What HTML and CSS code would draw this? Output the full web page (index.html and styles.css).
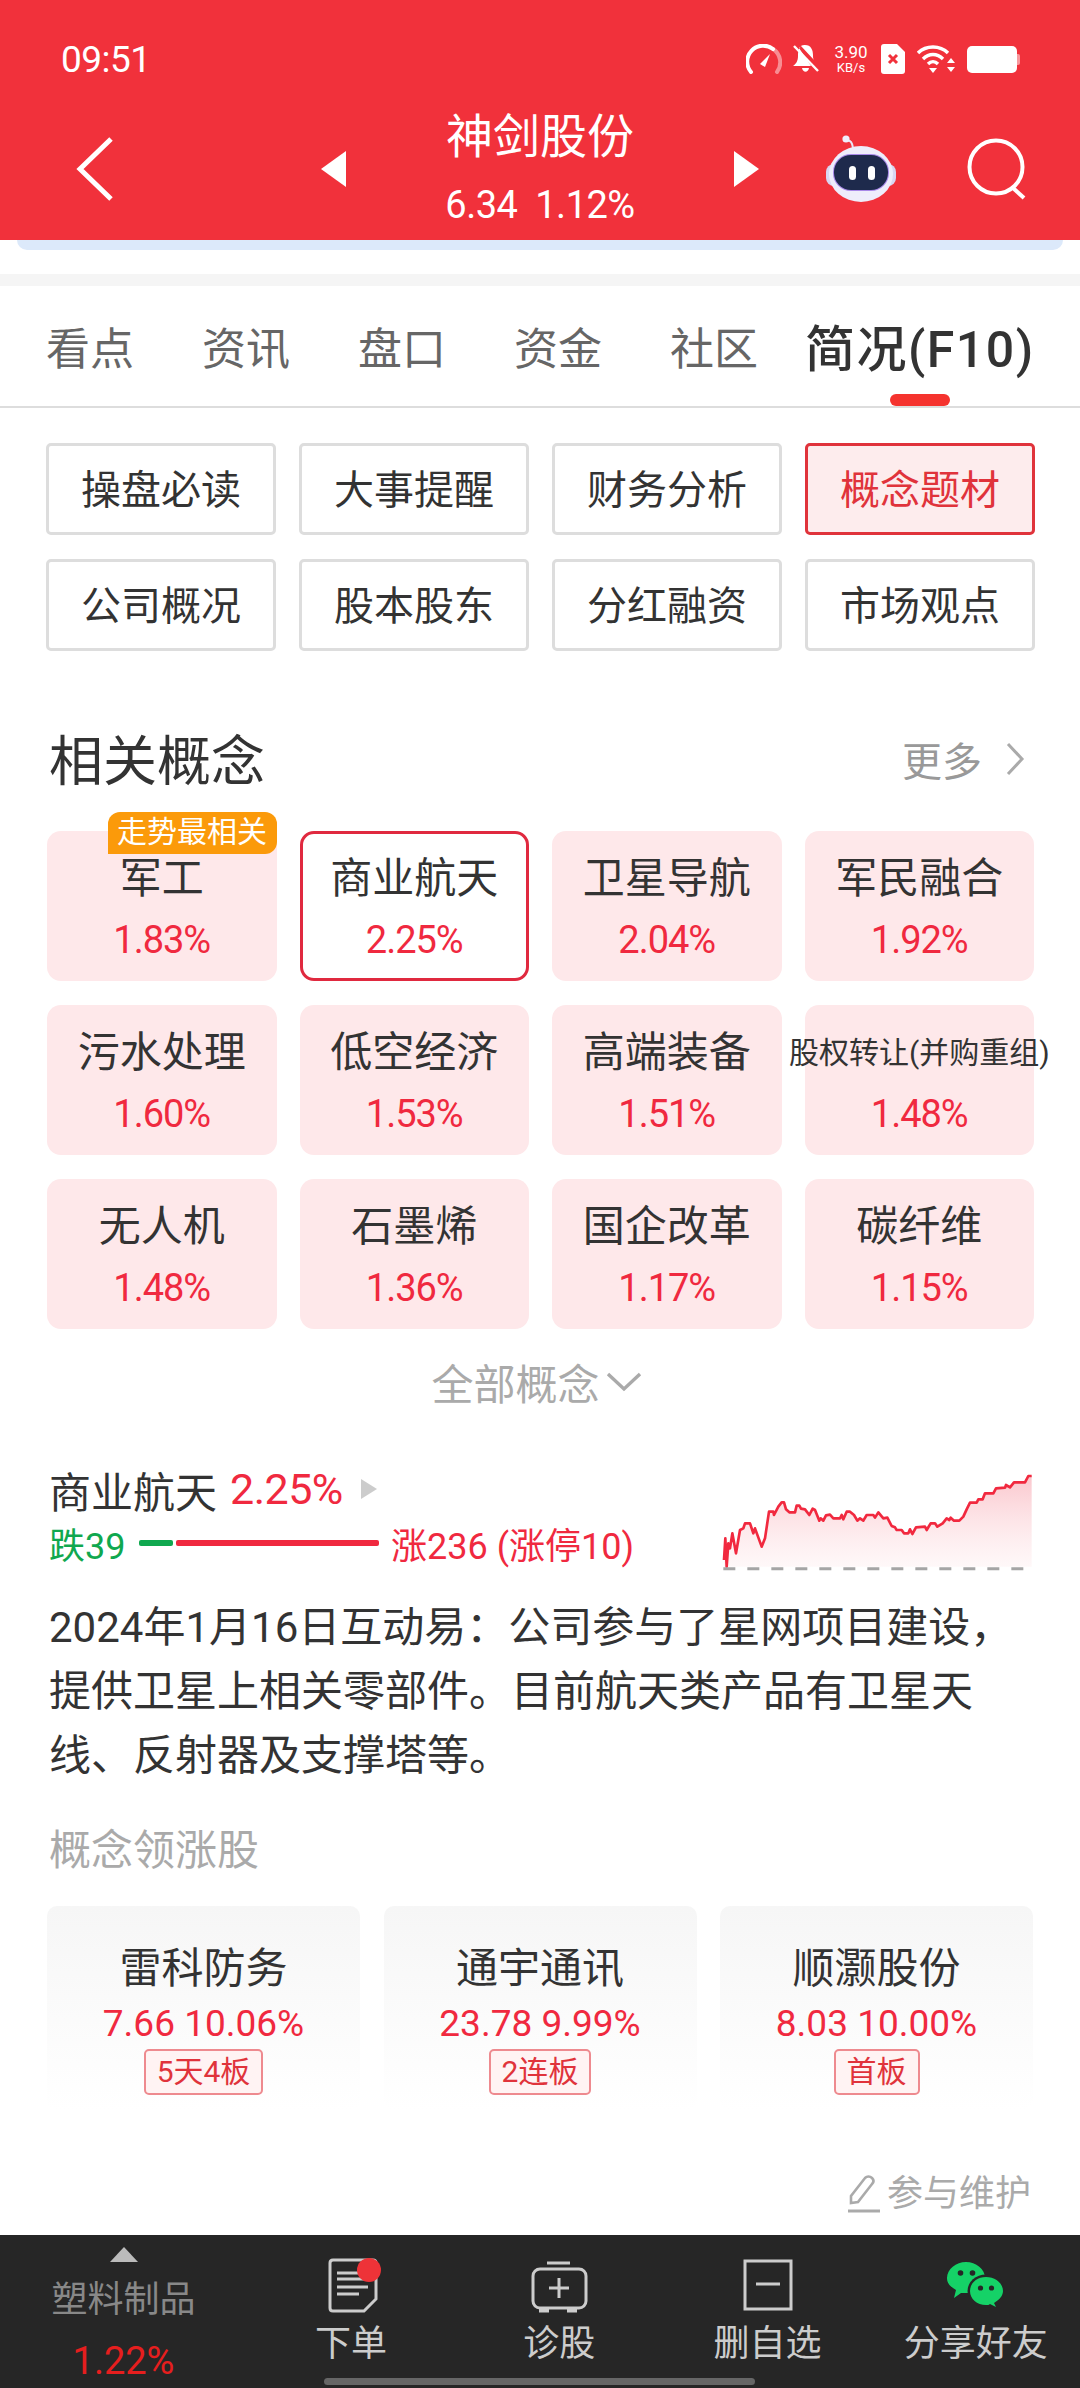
FILE: index.html
```html
<!DOCTYPE html>
<html lang="zh-CN">
<head>
    <meta charset="UTF-8">
    <meta name="viewport" content="width=device-width, initial-scale=1.0">
    <title>神剑股份</title>
    <link rel="stylesheet" href="styles.css">
</head>
<body>
<div class="page">

    <!-- 顶部红色区域 -->
    <header class="header">
        <div class="status">
            <span class="time">09:51</span>
            <div class="status-icons">
                <svg class="ic-gauge" width="36" height="30" viewBox="0 0 36 30" fill="none">
                    <path d="M5 28A16 16 0 0 1 27 5" stroke="#fff" stroke-width="4" stroke-linecap="round"/>
                    <path d="M27 5A16 16 0 0 1 31 28" stroke="#fff" stroke-opacity=".45" stroke-width="4" stroke-linecap="round"/>
                    <path d="M14 20L24 10L19 23Z" fill="#fff"/>
                </svg>
                <svg class="ic-bell" width="27" height="30" viewBox="0 0 27 30" fill="none">
                    <path d="M13 1C7 1 6 7 6 12C6 17 4 20 1 22H19L7 4C9 2 11 1 13 1Z" fill="#fff"/>
                    <path d="M13 1C19 1 21 6 21 11C21 13 21 15 22 16L9 2C10 1 12 1 13 1Z" fill="#fff"/>
                    <path d="M10 24H17C16 29 11 29 10 24Z" fill="#fff"/>
                    <path d="M2 2L26 27" stroke="#fff" stroke-width="2.4"/>
                </svg>
                <div class="speed"><span class="speed-num">3.90</span><span class="speed-unit">KB/s</span></div>
                <svg class="ic-sim" width="24" height="30" viewBox="0 0 24 30">
                    <path d="M3 0H16L24 8V27C24 29 23 30 21 30H3C1 30 0 29 0 27V3C0 1 1 0 3 0Z" fill="#fff"/>
                    <path d="M8 11L16 19M16 11L8 19" stroke="#f1313b" stroke-width="3"/>
                </svg>
                <svg class="ic-wifi" width="38" height="30" viewBox="0 0 38 30" fill="none" stroke="#fff" stroke-width="3.4">
                    <path d="M1 9C9 1 23 1 31 9"/>
                    <path d="M6 15C12 9 20 9 26 15"/>
                    <path d="M11 20C14 17 18 17 21 20"/>
                    <path d="M12 24H20L16 29Z" fill="#fff" stroke="none"/>
                    <path d="M30 19H38L34 14Z M30 23H38L34 28Z" fill="#fff" stroke="none"/>
                </svg>
                <div class="battery"></div>
            </div>
        </div>
        <div class="nav">
            <svg class="back" width="38" height="64" viewBox="0 0 38 64" fill="none">
                <path d="M35 2L4 32L35 62" stroke="#fff" stroke-width="5"/>
            </svg>
            <div class="tri tri-left"></div>
            <div class="stock">
                <div class="stock-name">神剑股份</div>
                <div class="stock-price">6.34&nbsp;&nbsp;1.12%</div>
            </div>
            <div class="tri tri-right"></div>
            <svg class="robot" width="74" height="68" viewBox="0 0 74 68">
                <path d="M29 13C28 7 27 6 23 5" fill="none" stroke="#e8e6f8" stroke-width="2"/>
                <circle cx="22" cy="4" r="3.6" fill="#f0eefc"/>
                <rect x="2" y="29" width="70" height="22" rx="8" fill="#d8d6f2"/>
                <ellipse cx="37" cy="39" rx="32" ry="28" fill="#eeedfb"/>
                <rect x="9" y="19" width="56" height="37" rx="18" fill="#a888e8"/>
                <rect x="10" y="20" width="54" height="35" rx="17" fill="#1e2a4c"/>
                <rect x="25" y="31" width="7" height="14" rx="3.5" fill="#fff"/>
                <rect x="44" y="31" width="7" height="14" rx="3.5" fill="#fff"/>
            </svg>
            <svg class="search" width="62" height="62" viewBox="0 0 62 62" fill="none" stroke="#fff" stroke-width="4">
                <circle cx="30" cy="29" r="26.5"/>
                <path d="M47 50L58 60"/>
            </svg>
        </div>
    </header>

    <main class="main">
        <div class="blue-strip"></div>
        <div class="gray-bar"></div>

        <nav class="tabs">
            <span class="tab">看点</span>
            <span class="tab">资讯</span>
            <span class="tab">盘口</span>
            <span class="tab">资金</span>
            <span class="tab">社区</span>
            <span class="tab tab-active">简况(F10)</span>
        </nav>

        <div class="sub-menu">
            <div class="sub-btn">操盘必读</div>
            <div class="sub-btn">大事提醒</div>
            <div class="sub-btn">财务分析</div>
            <div class="sub-btn sub-active">概念题材</div>
            <div class="sub-btn">公司概况</div>
            <div class="sub-btn">股本股东</div>
            <div class="sub-btn">分红融资</div>
            <div class="sub-btn">市场观点</div>
        </div>

        <div class="section-head">
            <h2 class="section-title">相关概念</h2>
            <div class="more">
                <span>更多</span>
                <svg width="20" height="34" viewBox="0 0 20 34" fill="none">
                    <path d="M3 2L17 17L3 32" stroke="#aaa" stroke-width="3"/>
                </svg>
            </div>
        </div>

        <div class="concepts">
            <div class="concept">
                <span class="badge">走势最相关</span>
                <div class="concept-name">军工</div>
                <div class="concept-pct">1.83%</div>
            </div>
            <div class="concept concept-on">
                <div class="concept-name">商业航天</div>
                <div class="concept-pct">2.25%</div>
            </div>
            <div class="concept">
                <div class="concept-name">卫星导航</div>
                <div class="concept-pct">2.04%</div>
            </div>
            <div class="concept">
                <div class="concept-name">军民融合</div>
                <div class="concept-pct">1.92%</div>
            </div>
            <div class="concept">
                <div class="concept-name">污水处理</div>
                <div class="concept-pct">1.60%</div>
            </div>
            <div class="concept">
                <div class="concept-name">低空经济</div>
                <div class="concept-pct">1.53%</div>
            </div>
            <div class="concept">
                <div class="concept-name">高端装备</div>
                <div class="concept-pct">1.51%</div>
            </div>
            <div class="concept">
                <div class="concept-name concept-long">股权转让(并购重组)</div>
                <div class="concept-pct">1.48%</div>
            </div>
            <div class="concept">
                <div class="concept-name">无人机</div>
                <div class="concept-pct">1.48%</div>
            </div>
            <div class="concept">
                <div class="concept-name">石墨烯</div>
                <div class="concept-pct">1.36%</div>
            </div>
            <div class="concept">
                <div class="concept-name">国企改革</div>
                <div class="concept-pct">1.17%</div>
            </div>
            <div class="concept">
                <div class="concept-name">碳纤维</div>
                <div class="concept-pct">1.15%</div>
            </div>
        </div>

        <div class="all-concepts">
            <span>全部概念</span>
            <svg width="36" height="22" viewBox="0 0 36 22" fill="none">
                <path d="M2 3L18 18L34 3" stroke="#aaa" stroke-width="3.4"/>
            </svg>
        </div>

        <div class="detail-head">
            <div class="detail-left">
                <div class="detail-title">
                    <span class="detail-name">商业航天</span>
                    <span class="detail-pct">2.25%</span>
                    <span class="detail-tri"></span>
                </div>
                <div class="breadth">
                    <span class="down">跌39</span>
                    <span class="bar-down"></span>
                    <span class="bar-up"></span>
                    <span class="up">涨236&nbsp;(涨停10)</span>
                </div>
            </div>
            <svg class="spark" width="312" height="102" viewBox="66 60 936 306">
                <defs>
                    <linearGradient id="sparkFill" x1="0" y1="0" x2="0" y2="1">
                        <stop offset="0" stop-color="#f9b5bd" stop-opacity=".75"/>
                        <stop offset="1" stop-color="#fdeaec" stop-opacity=".35"/>
                    </linearGradient>
                </defs>
                <path fill="url(#sparkFill)" d="M72 350L72 330L76 265L80 350L85 280L90 295L97 250L108 310L120 240L130 235L135 220L150 220L160 250L165 235L185 290L195 265L207 185L220 185L222 195L235 170L245 157L252 157L258 178L268 187L285 187L290 167L298 167L303 176L315 178L328 195L338 176L345 180L358 212L362 205L370 212L378 196L390 194L400 205L420 205L425 195L430 208L440 185L450 185L462 195L472 212L480 205L490 212L500 195L520 195L525 203L535 187L550 205L562 203L575 228L585 232L590 240L605 240L612 250L625 250L630 238L637 252L648 232L675 230L680 240L692 220L705 220L712 230L728 220L740 205L748 210L752 203L762 212L778 212L790 200L800 178L810 158L830 158L835 148L848 148L855 130L880 130L888 115L915 113L918 105L930 112L942 97L975 97L985 78L995 78L995 350Z"/>
                <polyline fill="none" stroke="#f1293f" stroke-width="8" stroke-linejoin="round" points="72,330 76,265 80,350 85,280 90,295 97,250 108,310 120,240 130,235 135,220 150,220 160,250 165,235 185,290 195,265 207,185 220,185 222,195 235,170 245,157 252,157 258,178 268,187 285,187 290,167 298,167 303,176 315,178 328,195 338,176 345,180 358,212 362,205 370,212 378,196 390,194 400,205 420,205 425,195 430,208 440,185 450,185 462,195 472,212 480,205 490,212 500,195 520,195 525,203 535,187 550,205 562,203 575,228 585,232 590,240 605,240 612,250 625,250 630,238 637,252 648,232 675,230 680,240 692,220 705,220 712,230 728,220 740,205 748,210 752,203 762,212 778,212 790,200 800,178 810,158 830,158 835,148 848,148 855,130 880,130 888,115 915,113 918,105 930,112 942,97 975,97 985,78 995,78"/>
                <line x1="70" y1="356" x2="995" y2="356" stroke="#a5a5a5" stroke-width="9" stroke-dasharray="36 36"/>
            </svg>
        </div>

        <p class="desc">2024年1月16日互动易：公司参与了星网项目建设，提供卫星上相关零部件。目前航天类产品有卫星天线、反射器及支撑塔等。</p>

        <div class="lead-title">概念领涨股</div>
        <div class="leaders">
            <div class="leader">
                <div class="leader-name">雷科防务</div>
                <div class="leader-price">7.66 10.06%</div>
                <span class="leader-tag">5天4板</span>
            </div>
            <div class="leader">
                <div class="leader-name">通宇通讯</div>
                <div class="leader-price">23.78 9.99%</div>
                <span class="leader-tag">2连板</span>
            </div>
            <div class="leader">
                <div class="leader-name">顺灏股份</div>
                <div class="leader-price">8.03 10.00%</div>
                <span class="leader-tag">首板</span>
            </div>
        </div>

        <div class="maintain">
            <svg width="34" height="38" viewBox="0 0 34 38" fill="none" stroke="#aaa" stroke-width="2.6">
                <path d="M4 28L4 21L18 3C20 1 23 1 25 3C27 5 27 7 25 9L11 27Z"/>
                <path d="M1 36H33" stroke-width="3"/>
            </svg>
            <span>参与维护</span>
        </div>
    </main>

    <!-- 底部工具栏 -->
    <footer class="toolbar">
        <div class="sector">
            <div class="sector-tri"></div>
            <div class="sector-name">塑料制品</div>
            <div class="sector-pct">1.22%</div>
        </div>
        <div class="tool">
            <svg class="tool-icon" width="60" height="58" viewBox="0 0 60 58" fill="none" stroke="#ccc" stroke-width="3">
                <path d="M12 3H52C54 3 55 4 55 6V42L43 54H12C10 54 9 53 9 51V6C9 4 10 3 12 3Z"/>
                <path d="M16 16H38M16 22H44M16 30H47M16 37H38"/>
                <circle cx="48" cy="13" r="12" fill="#ee3338" stroke="none"/>
            </svg>
            <span class="tool-label">下单</span>
        </div>
        <div class="tool">
            <svg class="tool-icon" width="60" height="58" viewBox="0 0 60 58" fill="none" stroke="#ccc" stroke-width="3">
                <path d="M18 6H41"/>
                <rect x="4" y="12" width="53" height="39" rx="7"/>
                <path d="M10 53H20M38 53H48" stroke-width="5"/>
                <path d="M30 21V41M20 31H40"/>
            </svg>
            <span class="tool-label">诊股</span>
        </div>
        <div class="tool">
            <svg class="tool-icon" width="60" height="58" viewBox="0 0 60 58" fill="none" stroke="#ccc" stroke-width="3">
                <rect x="7" y="4" width="46" height="48"/>
                <path d="M18 27H42"/>
            </svg>
            <span class="tool-label">删自选</span>
        </div>
        <div class="tool">
            <svg class="tool-icon" width="60" height="58" viewBox="0 0 60 58">
                <path d="M8 41L10 33C5 30 1 27 1 21C1 12 10 5 20 5C30 5 39 12 39 21C39 30 30 36 20 36C18 36 17 36 15 36Z" fill="#15d267"/>
                <ellipse cx="40" cy="34" rx="18.5" ry="16.5" fill="#262626"/>
                <path d="M50 50L48 46C53 43 57 39 57 34C57 26 49 20 40 20C31 20 24 26 24 34C24 42 31 48 40 48C42 48 43 48 44 47Z" fill="#15d267"/>
                <circle cx="14.5" cy="16" r="2.8" fill="#262626"/>
                <circle cx="26.5" cy="16" r="2.8" fill="#262626"/>
                <circle cx="34.5" cy="31" r="2.6" fill="#262626"/>
                <circle cx="45.5" cy="31" r="2.6" fill="#262626"/>
            </svg>
            <span class="tool-label">分享好友</span>
        </div>
        <div class="home-bar"></div>
    </footer>

</div>
</body>
</html>
```

FILE: styles.css
```css
* {
    box-sizing: border-box;
}
body {
    margin: 0;
    background-color: #fff;
    font-family: Roboto, "Noto Sans CJK SC", sans-serif;
    color: #333;
}
.page {
    width: 1080px;
    height: 2388px;
    display: flex;
    flex-direction: column;
    overflow: hidden;
}

/* header */
.header {
    height: 240px;
    background-color: #f1313b;
    color: #fff;
}
.status {
    height: 100px;
    padding: 18px 60px 0 61px;
    display: flex;
    align-items: center;
    justify-content: space-between;
}
.time {
    padding-top: 2px;
    font-size: 37px;
    line-height: 44px;
    letter-spacing: -0.5px;
}
.status-icons {
    display: flex;
    align-items: center;
}
.ic-bell {
    margin-left: 10px;
}
.speed {
    width: 40px;
    height: 32px;
    margin-left: 12px;
    display: flex;
    flex-direction: column;
    align-items: center;
}
.speed-num {
    font-size: 17px;
    line-height: 18px;
}
.speed-unit {
    font-size: 13px;
    line-height: 14px;
}
.ic-sim {
    margin-left: 10px;
}
.ic-wifi {
    margin-left: 12px;
}
.battery {
    position: relative;
    width: 50px;
    height: 27px;
    margin-left: 12px;
    margin-right: 3px;
    background-color: #fff;
    border-radius: 5px;
}
.battery::after {
    content: "";
    position: absolute;
    left: 50px;
    top: 8px;
    width: 3px;
    height: 11px;
    background-color: rgba(255, 255, 255, 0.5);
    border-radius: 0 2px 2px 0;
}
.nav {
    height: 140px;
    padding: 0 0 2px 76px;
    display: flex;
    align-items: center;
}
.tri {
    width: 0;
    height: 0;
    border-top: 18px solid transparent;
    border-bottom: 18px solid transparent;
}
.tri-left {
    margin-left: 207px;
    border-right: 25px solid #fff;
}
.tri-right {
    border-left: 25px solid #fff;
}
.stock {
    width: 388px;
    margin-bottom: 5px;
    text-align: center;
}
.stock-name {
    font-size: 47px;
    line-height: 68px;
}
.stock-price {
    margin-top: 9px;
    font-size: 38px;
    line-height: 50px;
    letter-spacing: -0.5px;
}
.robot {
    margin-left: 65px;
}
.search {
    margin-left: 68px;
}

/* content */
.main {
    flex: 1;
}
.blue-strip {
    height: 10px;
    margin: 0 17px 24px;
    background-color: #dce9fa;
    border-radius: 0 0 12px 12px;
}
.gray-bar {
    height: 12px;
    background-color: #f5f5f5;
}
.tabs {
    height: 122px;
    padding: 34px 0 0 46px;
    display: flex;
    gap: 68px;
    border-bottom: 2px solid #ddd;
}
.tab {
    font-size: 44px;
    line-height: 60px;
    color: #666;
}
.tab-active {
    position: relative;
    margin-left: -21px;
    font-size: 50px;
    font-weight: 500;
    letter-spacing: 1.5px;
    color: #333;
    white-space: nowrap;
}
.tab-active::after {
    content: "";
    position: absolute;
    left: 85px;
    top: 74px;
    width: 60px;
    height: 12px;
    background-color: #f5332e;
    border-radius: 6px;
}
.sub-menu {
    margin-top: 35px;
    padding: 0 46px;
    display: grid;
    grid-template-columns: repeat(4, 230px);
    grid-auto-rows: 92px;
    gap: 24px 23px;
}
.sub-btn {
    padding-bottom: 4px;
    display: flex;
    align-items: center;
    justify-content: center;
    font-size: 40px;
    border: 3px solid #ddd;
    border-radius: 5px;
}
.sub-active {
    color: #e0333b;
    background-color: #fdeced;
    border-color: #e0333b;
}
.section-head {
    height: 70px;
    margin-top: 73px;
    padding: 0 55px 0 49px;
    display: flex;
    align-items: center;
    justify-content: space-between;
}
.section-title {
    align-self: flex-start;
    margin: 0;
    padding-top: 4px;
    font-size: 54px;
    font-weight: 400;
    line-height: 70px;
}
.more {
    display: flex;
    align-items: center;
    gap: 23px;
    font-size: 40px;
    color: #999;
}
.concepts {
    margin-top: 37px;
    padding-left: 47px;
    display: grid;
    grid-template-columns: repeat(4, 229.5px);
    grid-auto-rows: 150px;
    gap: 24px 23px;
}
.concept {
    position: relative;
    padding-top: 18px;
    text-align: center;
    background-color: #fee8ea;
    border-radius: 14px;
}
.concept-on {
    padding-top: 15px;
    background-color: #fff;
    border: 3px solid #e0293f;
}
.concept-name {
    font-size: 42px;
    line-height: 60px;
    white-space: nowrap;
}
.concept-long {
    margin: 0 -20px;
    font-size: 30px;
}
.concept-pct {
    margin-top: 6px;
    font-size: 38px;
    line-height: 50px;
    letter-spacing: -1px;
    color: #f0293f;
}
.badge {
    position: absolute;
    right: 0;
    top: -19px;
    width: 169px;
    height: 42px;
    font-size: 30px;
    line-height: 40px;
    color: #fff;
    background-color: #fb9a0a;
    border-radius: 12px 12px 12px 0;
}
.all-concepts {
    margin-top: 24px;
    padding: 0 7px 3px 0;
    display: flex;
    align-items: center;
    justify-content: center;
    gap: 6px;
    height: 60px;
    font-size: 42px;
    color: #aaa;
}
.detail-head {
    margin-top: 46px;
    padding: 0 0 0 49px;
    display: flex;
    align-items: flex-start;
    justify-content: space-between;
}
.detail-left {
    width: 640px;
}
.detail-title {
    display: flex;
    align-items: center;
    height: 60px;
    font-size: 42px;
}
.detail-pct {
    margin-left: 13px;
    font-size: 43px;
    letter-spacing: -0.5px;
    color: #f0293f;
}
.detail-tri {
    margin-left: 18px;
    border-top: 10px solid transparent;
    border-bottom: 10px solid transparent;
    border-left: 16px solid #ccc;
}
.breadth {
    display: flex;
    align-items: center;
    height: 48px;
    font-size: 36px;
}
.down {
    width: 90px;
    color: #10a84f;
}
.up {
    margin-left: 12px;
    color: #f0293f;
    white-space: nowrap;
}
.bar-down {
    width: 34px;
    height: 6px;
    background-color: #10a84f;
    border-radius: 2px;
}
.bar-up {
    width: 203px;
    height: 6px;
    margin-left: 3px;
    background-color: #f0293f;
    border-radius: 2px;
}
.spark {
    margin: 11px 46px 0 0;
}
.desc {
    margin: 24px 0 0;
    padding: 0 46px 0 49px;
    font-size: 42px;
    line-height: 64px;
}
.lead-title {
    margin-top: 33px;
    padding-left: 49px;
    font-size: 42px;
    line-height: 60px;
    color: #aaa;
}
.leaders {
    margin-top: 25px;
    padding-left: 47px;
    display: grid;
    grid-template-columns: repeat(3, 313px);
    gap: 23.5px;
}
.leader {
    height: 204px;
    padding-top: 33px;
    text-align: center;
    background: linear-gradient(#f6f6f6, #fff);
    border-radius: 10px;
}
.leader-name {
    font-size: 42px;
    line-height: 60px;
}
.leader-price {
    font-size: 37px;
    line-height: 50px;
    color: #f0293f;
}
.leader-tag {
    display: inline-block;
    padding: 0 11px;
    font-size: 30px;
    line-height: 42px;
    color: #e0333b;
    background-color: #fff3f3;
    border: 2px solid #ee8a8f;
    border-radius: 5px;
}
.maintain {
    margin-top: 59px;
    padding-right: 49px;
    display: flex;
    align-items: center;
    justify-content: flex-end;
    gap: 6px;
    font-size: 36px;
    line-height: 50px;
    color: #aaa;
}

/* toolbar */
.toolbar {
    position: relative;
    height: 153px;
    display: flex;
    background-color: #262626;
}
.sector {
    width: 247px;
    padding-top: 12px;
    display: flex;
    flex-direction: column;
    align-items: center;
}
.sector-tri {
    border-left: 14px solid transparent;
    border-right: 14px solid transparent;
    border-bottom: 15px solid #bbb;
}
.sector-name {
    margin-top: 15px;
    font-size: 36px;
    line-height: 46px;
    color: #888;
}
.sector-pct {
    margin-top: 13px;
    font-size: 38px;
    line-height: 50px;
    color: #e61e1e;
}
.tool {
    flex: 1;
    padding-top: 22px;
    display: flex;
    flex-direction: column;
    align-items: center;
}
.tool-label {
    margin-top: 4px;
    font-size: 36px;
    line-height: 50px;
    color: #ccc;
}
.home-bar {
    position: absolute;
    left: 324px;
    bottom: 3px;
    width: 431px;
    height: 7px;
    background-color: #666;
    border-radius: 4px;
}
```
